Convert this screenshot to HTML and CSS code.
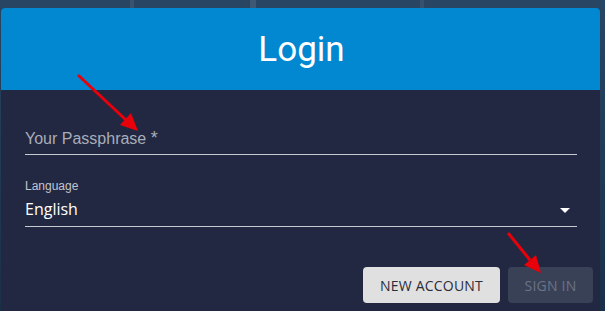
FILE: index.html
```html
<!DOCTYPE html>
<html lang="en">

<head>
  <meta charset="UTF-8">
  <meta name="viewport" content="width=device-width, initial-scale=1.0">
  <title>Login</title>
  <link rel="stylesheet" href="styles.css">
</head>

<body>
  <div class="dialog">
    <div class="header">
      <h1>Login</h1>
    </div>
    <div class="content">
      <div class="field passphrase">
        <span class="placeholder">Your Passphrase <span class="req">*</span></span>
      </div>
      <div class="field language">
        <label>Language</label>
        <div class="select">
          <span>English</span>
          <span class="caret"></span>
        </div>
      </div>
    </div>
    <div class="actions">
      <button class="btn light">New account</button>
      <button class="btn disabled">Sign in</button>
    </div>
  </div>

  <!-- annotation arrows -->
  <svg class="marks" width="605" height="311" viewBox="0 0 605 311">
    <line x1="78" y1="75" x2="126" y2="120" />
    <polygon points="138,131 120,125 131,113" />
    <line x1="508" y1="233" x2="530" y2="260" />
    <polygon points="541,273 524,265 536,255" />
  </svg>
</body>

</html>
```

FILE: styles.css
```css
body,
html {
  margin: 0;
  padding: 0;
  height: 100%;
  overflow: hidden;
}

body {
  background-color: #1d3652;
  background-image:
    linear-gradient(90deg, transparent 0 130px, rgba(255, 255, 255, .08) 130px 134px, transparent 134px 250px, rgba(255, 255, 255, .1) 250px 256px, transparent 256px 420px, rgba(255, 255, 255, .07) 420px 424px, transparent 424px),
    linear-gradient(180deg, #284563, #1a3048);
  font-family: "Liberation Sans", Arial, sans-serif;
}

.dialog {
  margin: 8px 0 0 1px;
  width: 599px;
  height: 303px;
  background-color: #222841;
  border-radius: 4px 4px 0 0;
  overflow: hidden;
}

.header {
  height: 82px;
  background-color: #0288d1;
  display: flex;
  align-items: center;
  justify-content: center;
}

.header h1 {
  margin: 0;
  font-family: Roboto, sans-serif;
  font-weight: 400;
  font-size: 35px;
  color: white;
  padding-left: 2px;
}

.content {
  padding: 0 23px 0 24px;
}

.field {
  border-bottom: 1px solid #c9cbd3;
}

.passphrase {
  margin-top: 38px;
  padding-bottom: 4px;
  height: 22px;
  line-height: 22px;
  font-size: 16px;
}

.placeholder {
  color: #a9adb9;
}

.placeholder .req {
  font-size: 18px;
  line-height: 0;
}

.language {
  margin-top: 24px;
  padding-bottom: 5px;
}

.language label {
  display: block;
  font-size: 12px;
  line-height: 14px;
  color: #c3c5cd;
}

.select {
  margin-top: 4px;
  display: flex;
  align-items: center;
  justify-content: space-between;
  font-family: "Open Sans", sans-serif;
  font-size: 16px;
  line-height: 24px;
  color: white;
}

.caret {
  width: 0;
  height: 0;
  margin-right: 7px;
  margin-top: 2px;
  border-left: 5px solid transparent;
  border-right: 5px solid transparent;
  border-top: 5px solid white;
}

.actions {
  display: flex;
  justify-content: flex-end;
  gap: 8px;
  margin-top: 40px;
  padding-right: 7px;
}

.btn {
  height: 36px;
  padding: 0 16px;
  border: none;
  border-radius: 4px;
  font-family: "Open Sans", sans-serif;
  font-size: 14px;
  letter-spacing: .2px;
  text-transform: uppercase;
}

.btn.light {
  background-color: #e0e0e0;
  color: #2b2d3b;
  width: 137px;
}

.btn.disabled {
  background-color: #394156;
  color: #6b7387;
  width: 85px;
}

.marks {
  position: absolute;
  left: 0;
  top: 0;
}

.marks line {
  stroke: #e8000a;
  stroke-width: 3;
}

.marks polygon {
  fill: #e8000a;
}
```
